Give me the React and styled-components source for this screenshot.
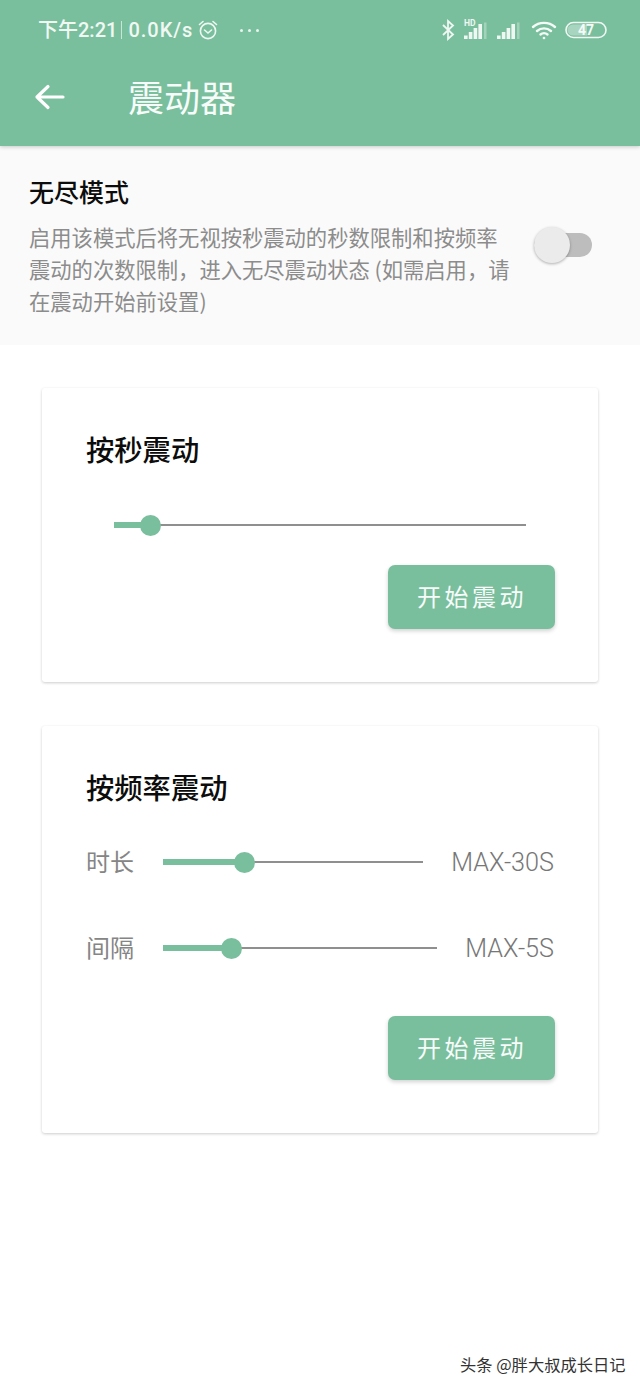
import React from "react";
import styled, { createGlobalStyle } from "styled-components";

const GREEN = "#7abf9d";
const CJK = `"Noto Sans CJK SC", "Noto Sans", sans-serif`;

const Global = createGlobalStyle`
  html, body { margin: 0; padding: 0; background: #fff; }
  * { box-sizing: border-box; }
`;
const Page = styled.div`
  position: relative; width: 640px; height: 1387px; overflow: hidden;
  background: #fff; font-family: ${CJK};
`;
const Header = styled.header`
  height: 146px; background: ${GREEN}; color: #fff; padding: 17px 0 0;
  box-shadow: 0 1px 4px rgba(0,0,0,.2); position: relative; z-index: 1;
`;
const StatusBar = styled.div`
  height: 26px; display: flex; align-items: center; padding: 0 33px 0 38px;
  color: #f1f8f4; font-size: 20px; line-height: 26px;
`;
const StatusText = styled.span`
  font-family: Roboto, ${CJK};
  font-weight: 500; white-space: nowrap; letter-spacing: ${p => p.$ls || 0}px;
`;
const Divider = styled.span`
  width: 1px; height: 18px; background: rgba(255,255,255,.6); margin: 0 6px 0 4px;
`;
const Dots = styled.span`
  display: flex; gap: 5px; margin-left: 21px;
  i { width: 3px; height: 3px; border-radius: 50%; background: #e8f4ed; }
`;
const Spacer = styled.div`flex: 1;`;
const StatusIcons = styled.div`display: flex; align-items: center;`;
const IconGap = styled.span`width: ${p => p.$w}px; flex: none;`;
const NavBar = styled.div`
  display: flex; align-items: center; height: 62px; margin-top: 23px; padding: 0 0 0 34px;
`;
const BackBtn = styled.svg`width: 32px; height: 32px; flex: none;`;
const Title = styled.h1`
  margin: -3px 0 0 62px; font-size: 36px; font-weight: 400; line-height: 48px; color: #f7fbf9;
`;
const Settings = styled.section`
  height: 199px; background: #fafafa; padding: 27px 0 0 29px;
  display: flex; align-items: flex-start;
`;
const SettingsText = styled.div`width: 486px;`;
const SettingsTitle = styled.div`
  font-size: 25px; line-height: 36px; font-weight: 500; color: #0c0c0c;
`;
const Desc = styled.div`
  margin-top: 12px; font-size: 21.3px; line-height: 32px; color: #8c8c8c;
`;
const Toggle = styled.div`
  position: relative; width: 58px; height: 24px; margin: 60px 0 0 19px;
  border-radius: 12px; background: #bdbdbd; flex: none;
`;
const ToggleThumb = styled.div`
  position: absolute; left: 0; top: -6px; width: 36px; height: 36px; border-radius: 50%;
  background: #ebebeb; box-shadow: 0 1px 3px rgba(0,0,0,.3);
`;
const Cards = styled.main`
  display: flex; flex-direction: column; gap: 44px; padding: 43px 42px 0;
`;
const Card = styled.section`
  height: ${p => p.$h}px; background: #fff; border-radius: 3px; padding: 42px 43px 0 44px;
  box-shadow: 0 1px 3px rgba(0,0,0,.2);
`;
const CardTitle = styled.h2`
  margin: 0; font-size: 28.3px; line-height: 38px; font-weight: 500; color: #0c0c0c;
`;
const SliderWrap = styled.div`
  position: relative; height: 22px; flex: none;
  width: ${p => p.$w}px; display: flex; align-items: center;
`;
const SliderLine = styled.div`height: 2px; width: 100%; background: #8f8f8f;`;
const SliderFill = styled.div`
  position: absolute; left: 0; top: 8px; height: 6px; background: ${GREEN};
`;
const SliderThumb = styled.div`
  position: absolute; top: 0.5px; width: 21px; height: 21px; margin-left: -10.5px;
  border-radius: 50%; background: ${GREEN};
`;
const Slider = ({ w, pos }) => (
  <SliderWrap $w={w}>
    <SliderLine />
    <SliderFill style={{ width: pos }} />
    <SliderThumb style={{ left: pos }} />
  </SliderWrap>
);
const TopSlider = styled.div`margin: 46px 0 0 28px;`;
const Actions = styled.div`display: flex; justify-content: flex-end; margin-top: ${p => p.$mt}px;`;
const Button = styled.button`
  width: 167px; height: 64px; border: 0; border-radius: 7px; background: ${GREEN};
  color: #f7fbf9; font-family: ${CJK}; font-size: 24px; letter-spacing: 3.5px; padding: 0 0 4px 1px;
  font-weight: 400; box-shadow: 0 2px 4px rgba(0,0,0,.18);
`;
const Rows = styled.div`
  display: flex; flex-direction: column; gap: 54px; margin-top: 40px;
`;
const Row = styled.div`
  display: flex; align-items: center; height: 32px; padding-right: 1px; color: #858585; font-size: 24px;
`;
const RowLabel = styled.span`width: 77px; flex: none; line-height: 32px; margin-top: -2px;`;
const MaxLabel = styled.span`
  margin-left: auto; font-family: Roboto, sans-serif; font-size: 25.2px; font-weight: 300; color: #777; white-space: nowrap;
`;
const Watermark = styled.div`
  position: absolute; left: 460px; top: 1352px; font-size: 16.3px; line-height: 24px;
  color: #333; white-space: nowrap;
`;

const Alarm = () => (
  <svg width="22" height="22" viewBox="0 0 22 22" fill="none" stroke="#eef7f2" strokeWidth="1.6" style={{ marginLeft: 4 }} strokeLinecap="round">
    <circle cx="11" cy="12" r="7.6" />
    <path d="M7.5 11l3.5 3 3.5-3" />
    <path d="M2.5 5.5L6 2.5M19.5 5.5L16 2.5" />
  </svg>
);
const Bluetooth = () => (
  <svg width="14" height="22" viewBox="0 0 14 22" fill="none" stroke="#eef7f2" strokeWidth="1.8">
    <path d="M2 6l10 9.5L7 20V2l5 4.5L2 16" />
  </svg>
);
const Bars = ({ hd }) => (
  <svg width="26" height="24" viewBox="0 0 26 24" fill="#eef7f2">
    {hd && <text x="1" y="8" fontSize="8.5" fontWeight="700" fontFamily="Roboto, sans-serif">HD</text>}
    <rect x="1" y="17.500" width="3.600" height="3.500" />
    <rect x="5.800" y="14" width="3.600" height="7" />
    <rect x="10.600" y="10" width="3.600" height="11" />
    <rect x="15.400" y="6" width="3.600" height="15" />
    <rect x="21" y="4.500" width="2.500" height="16.500" opacity=".35" />
  </svg>
);
const Wifi = () => (
  <svg width="26" height="22" viewBox="0 0 26 22" fill="none" stroke="#f4faf7" strokeWidth="2.4" strokeLinecap="round">
    <path d="M2 8c6-5.500 16-5.500 22 0" />
    <path d="M6 12c4-3.500 10-3.500 14 0" />
    <path d="M9.500 15.500c2-1.700 5-1.700 7 0" />
    <circle cx="13" cy="19" r="1.300" fill="#f4faf7" stroke="none" />
  </svg>
);
const Battery = () => (
  <svg width="42" height="20" viewBox="0 0 42 20">
    <rect x="1" y="2.500" width="40" height="15" rx="7.500" fill="none" stroke="#f1f8f4" strokeWidth="1.600" />
    <path d="M8 4.500h14v11H8a5.500 5.500 0 0 1 0-11z" fill="rgba(255,255,255,.35)" />
    <text x="21" y="15" textAnchor="middle" fontSize="14" fontWeight="700" fontFamily="Roboto, sans-serif" fill="#f4faf7">47</text>
  </svg>
);

export default function App() {
  return (
    <Page>
      <Global />
      <Header>
        <StatusBar>
          <StatusText>下午2:21</StatusText>
          <Divider />
          <StatusText $ls={1}>0.0K/s</StatusText>
          <Alarm />
          <Dots><i /><i /><i /></Dots>
          <Spacer />
          <StatusIcons>
            <Bluetooth />
            <IconGap $w={8} />
            <Bars hd />
            <IconGap $w={7} />
            <Bars />
            <IconGap $w={9} />
            <Wifi />
            <IconGap $w={8} />
            <Battery />
          </StatusIcons>
        </StatusBar>
        <NavBar>
          <BackBtn viewBox="0 0 32 32" fill="none" stroke="#fff" strokeWidth="3.200" strokeLinecap="round" strokeLinejoin="round">
            <path d="M3 16h26M14 5.500L3 16l11 10.500" />
          </BackBtn>
          <Title>震动器</Title>
        </NavBar>
      </Header>
      <Settings>
        <SettingsText>
          <SettingsTitle>无尽模式</SettingsTitle>
          <Desc>启用该模式后将无视按秒震动的秒数限制和按频率震动的次数限制，进入无尽震动状态 (如需启用，请在震动开始前设置)</Desc>
        </SettingsText>
        <Toggle><ToggleThumb /></Toggle>
      </Settings>
      <Cards>
        <Card $h={294}>
          <CardTitle>按秒震动</CardTitle>
          <TopSlider><Slider w={412} pos={36.5} /></TopSlider>
          <Actions $mt={29}><Button>开始震动</Button></Actions>
        </Card>
        <Card $h={407}>
          <CardTitle>按频率震动</CardTitle>
          <Rows>
            <Row>
              <RowLabel>时长</RowLabel>
              <Slider w={260} pos={81.5} />
              <MaxLabel>MAX-30S</MaxLabel>
            </Row>
            <Row>
              <RowLabel>间隔</RowLabel>
              <Slider w={274} pos={68.5} />
              <MaxLabel>MAX-5S</MaxLabel>
            </Row>
          </Rows>
          <Actions $mt={52}><Button>开始震动</Button></Actions>
        </Card>
      </Cards>
      <Watermark>头条 @胖大叔成长日记</Watermark>
    </Page>
  );
}
